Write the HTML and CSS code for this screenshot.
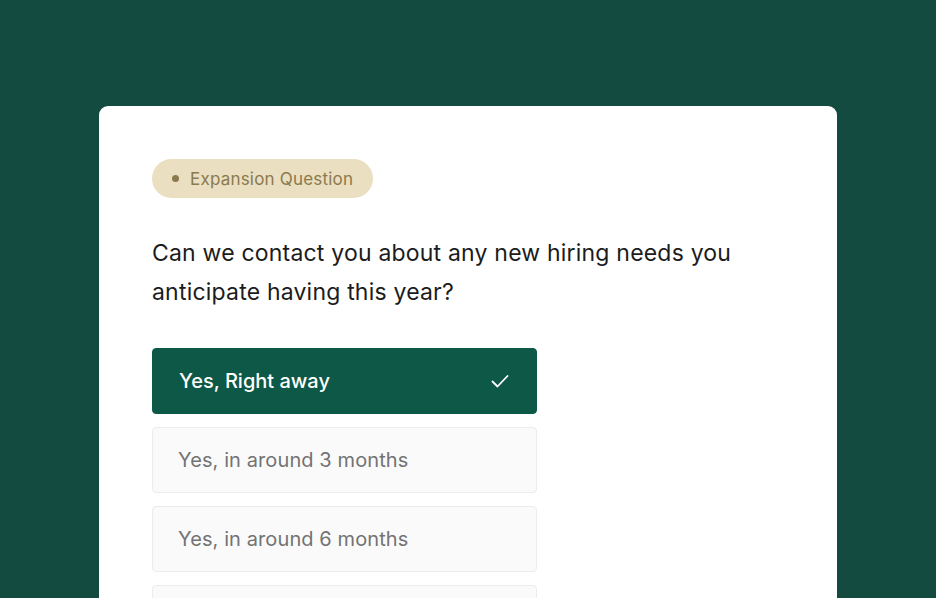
FILE: index.html
```html
<!DOCTYPE html>
<html>
<head>
<meta charset="utf-8">
<link rel="stylesheet" href="styles.css">
</head>
<body>
<div class="card">
  <div class="badge"><span class="dot"></span><span>Expansion Question</span></div>
  <p class="question">Can we contact you about any new hiring needs you anticipate having this year?</p>
  <div class="options">
    <div class="option selected">
      <span>Yes, Right away</span>
      <svg class="check" width="20" height="20" viewBox="0 0 20 20"><path d="M2.5 10.5 L7.5 15.5 L17.5 5" fill="none" stroke="#fff" stroke-width="1.8" stroke-linecap="round" stroke-linejoin="round"/></svg>
    </div>
    <div class="option"><span>Yes, in around 3 months</span></div>
    <div class="option"><span>Yes, in around 6 months</span></div>
    <div class="option"><span>Not at the moment</span></div>
  </div>
</div>
</body>
</html>
```
FILE: styles.css
```css
html, body {
  margin: 0;
  padding: 0;
  height: 100%;
  overflow: hidden;
}
body {
  background: #144b40;
  font-family: Inter, "Noto Sans", sans-serif;
}
.card {
  margin: 106px 0 0 99px;
  width: 738px;
  height: 600px;
  box-sizing: border-box;
  background: #ffffff;
  border-radius: 9px;
  padding: 53px 0 0 53px;
}
.badge {
  display: inline-flex;
  align-items: center;
  height: 39px;
  padding: 0 20px 0 20px;
  box-sizing: border-box;
  white-space: nowrap;
  border-radius: 20px;
  background: #ebdfc2;
  color: #8a7a4d;
  font-size: 17px;
  letter-spacing: 0.2px;
}
.dot {
  width: 7px;
  height: 7px;
  border-radius: 50%;
  background: #8a7a4d;
  margin-right: 11px;
  flex: none;
}
.question {
  margin: 36px 0 0 0;
  width: 620px;
  font-size: 23px;
  line-height: 39px;
  color: #1c1c1c;
  letter-spacing: 0.2px;
}
.options {
  margin-top: 36px;
  display: flex;
  flex-direction: column;
  gap: 13px;
  width: 385px;
}
.option {
  height: 66px;
  box-sizing: border-box;
  display: flex;
  align-items: center;
  justify-content: space-between;
  padding: 0 26px 0 25px;
  border: 1px solid #ececec;
  background: #fafafa;
  border-radius: 4px;
  font-size: 20px;
  color: #737373;
  letter-spacing: 0.1px;
}
.option.selected {
  background: #0d5847;
  border-color: #0d5847;
  color: #ffffff;
  font-size: 20px;
  font-weight: 500;
  letter-spacing: 0;
  padding-left: 26px;
}
```
